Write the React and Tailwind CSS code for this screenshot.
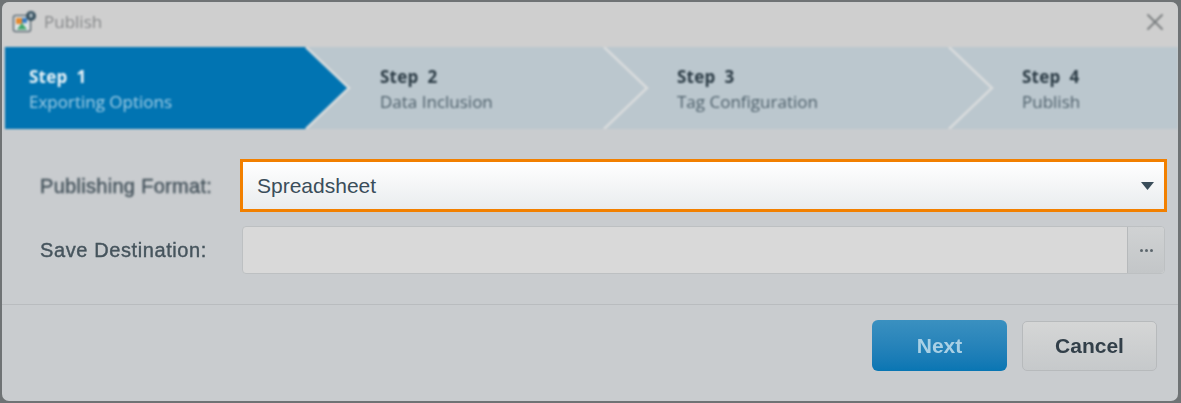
import React from 'react';
import { X } from 'lucide-react';

const font = { fontFamily: '"Liberation Sans", Arial, sans-serif' };

const steps = [
  { n: 1, label: 'Exporting Options', w: 'w-[342px]', pad: 'pl-[24px]', active: true },
  { n: 2, label: 'Data Inclusion', w: 'w-[298px]', pad: 'pl-[33px]' },
  { n: 3, label: 'Tag Configuration', w: 'w-[345px]', pad: 'pl-[32px]' },
  { n: 4, label: 'Publish', w: 'flex-1', pad: 'pl-[32px]' },
];

const Chevron = () => (
  <svg className="absolute right-[-4px] top-0 h-[82px] w-[46px]" viewBox="0 0 46 82" fill="none">
    <path d="M1 0 L44 41 L1 82" stroke="#d9dcdd" strokeWidth="2.5" />
  </svg>
);

const AppIcon = () => (
  <svg width="26" height="24" viewBox="0 0 26 24" className="shrink-0">
    <rect x="1.5" y="5.5" width="17" height="16" rx="2" fill="#dfe3e6" stroke="#5c6a72" strokeWidth="1.5" />
    <rect x="4" y="8" width="6" height="6" fill="#e58a2e" />
    <rect x="10" y="8" width="5" height="5" fill="#3b7fc4" />
    <path d="M5 19.5 L10 13 L15 19.5 Z" fill="#3fa66a" />
    <circle cx="19" cy="6" r="5" fill="#36505f" />
    <rect x="17.5" y="3.5" width="3" height="4" fill="#b9c7cf" />
  </svg>
);

const App = () => {
  return (
    <div className="h-[403px] w-[1181px] overflow-hidden bg-[#6f7375] p-[2px]" style={font}>
      <div className="flex h-[399px] w-[1176px] flex-col overflow-hidden rounded-[7px] bg-[#c9cccf]">
        <div className="blur-[0.8px]">
          {/* Title bar */}
          <div className="flex h-[45px] items-center justify-between bg-[#cfcfcf] pb-[5px] pl-[10px] pr-[9px]">
            <div className="flex items-center gap-[6px]">
              <AppIcon />
              <span className="text-[17px] text-[#858789]" style={{ fontFamily: '"Open Sans", sans-serif' }}>Publish</span>
            </div>
            <X size={28} strokeWidth={1.7} className="text-[#7d8082]" />
          </div>

          {/* Stepper */}
          <div className="ml-[3px] flex h-[82px] bg-[#bbc7ce]">
            {steps.map((s) => (
              <div key={s.n} className={`relative flex h-full flex-col justify-center pt-[2px] ${s.w} ${s.pad}`} style={{ fontFamily: '"Open Sans", sans-serif' }}>
                {s.active ? (
                  <div className="absolute inset-y-0 left-0 right-[-1px] bg-[#0174b2] [clip-path:polygon(0_0,calc(100%-41px)_0,100%_50%,calc(100%-41px)_100%,0_100%)]" />
                ) : null}
                {s.n < 4 ? <Chevron /> : null}
                <div className={`relative text-[17px] font-bold leading-[25px] tracking-[0.2px] ${s.active ? 'text-[#eaf3f8]' : 'text-[#2a3a44]'}`}>
                  <span className="whitespace-pre">Step  {s.n}</span>
                </div>
                <div className={`relative text-[17px] leading-[25px] ${s.active ? 'text-[#a4cfe6]' : 'text-[#4d5f6a]'}`}>{s.label}</div>
              </div>
            ))}
          </div>
        </div>

        {/* Form */}
        <div className="flex flex-col border-b border-[#b9bcbf] pb-[29px] pl-[38px] pr-[11px] pt-[30px]">
          <div className="flex h-[53px] items-center">
            <label className="w-[200px] pt-[1px] text-[20px] tracking-[0.3px] text-[#46545d] blur-[0.8px] [-webkit-text-stroke:0.4px_#46545d]">Publishing Format:</label>
            <div className="flex h-[53px] flex-1 items-center justify-between border-[3px] border-[#f28000] bg-gradient-to-b from-[#ffffff] to-[#e9ecee] pl-[14px] pr-[10px]">
              <span className="text-[21px] text-[#3a4d5a]">Spreadsheet</span>
              <svg width="13" height="8" viewBox="0 0 13 8"><path d="M0 0 H13 L6.5 8 Z" fill="#3a4d5a" /></svg>
            </div>
          </div>
          <div className="mt-[13px] flex h-[50px] items-center blur-[0.7px]">
            <label className="w-[202px] text-[20px] tracking-[0.6px] text-[#46545d] [-webkit-text-stroke:0.4px_#46545d]">Save Destination:</label>
            <div className="mr-[2px] flex h-[48px] flex-1 rounded-[4px] border border-[#bdc0c2] bg-[#d9d9d9]">
              <div className="flex-1" />
              <div className="flex w-[37px] items-center justify-center rounded-r-[4px] border-l border-[#b6b9bb] bg-gradient-to-b from-[#d0d2d3] to-[#c3c6c8]">
                <span className="flex gap-[2px]">
                  <i className="h-[3px] w-[3px] rounded-full bg-[#5c666c]" />
                  <i className="h-[3px] w-[3px] rounded-full bg-[#5c666c]" />
                  <i className="h-[3px] w-[3px] rounded-full bg-[#5c666c]" />
                </span>
              </div>
            </div>
          </div>
        </div>

        {/* Footer */}
        <div className="flex flex-1 items-start justify-end gap-[15px] pr-[21px] pt-[15px] blur-[0.7px]">
          <button className="h-[51px] w-[135px] rounded-[6px] bg-gradient-to-b from-[#3a90c0] to-[#0876b3] text-[21px] font-bold text-[#a9d0e5]">Next</button>
          <button className="mt-[1px] h-[50px] w-[135px] rounded-[5px] border border-[#b7babc] bg-gradient-to-b from-[#d5d6d6] to-[#c6c9cb] text-[21px] font-bold text-[#323f49]">Cancel</button>
        </div>
      </div>
    </div>
  );
};

export default App;
